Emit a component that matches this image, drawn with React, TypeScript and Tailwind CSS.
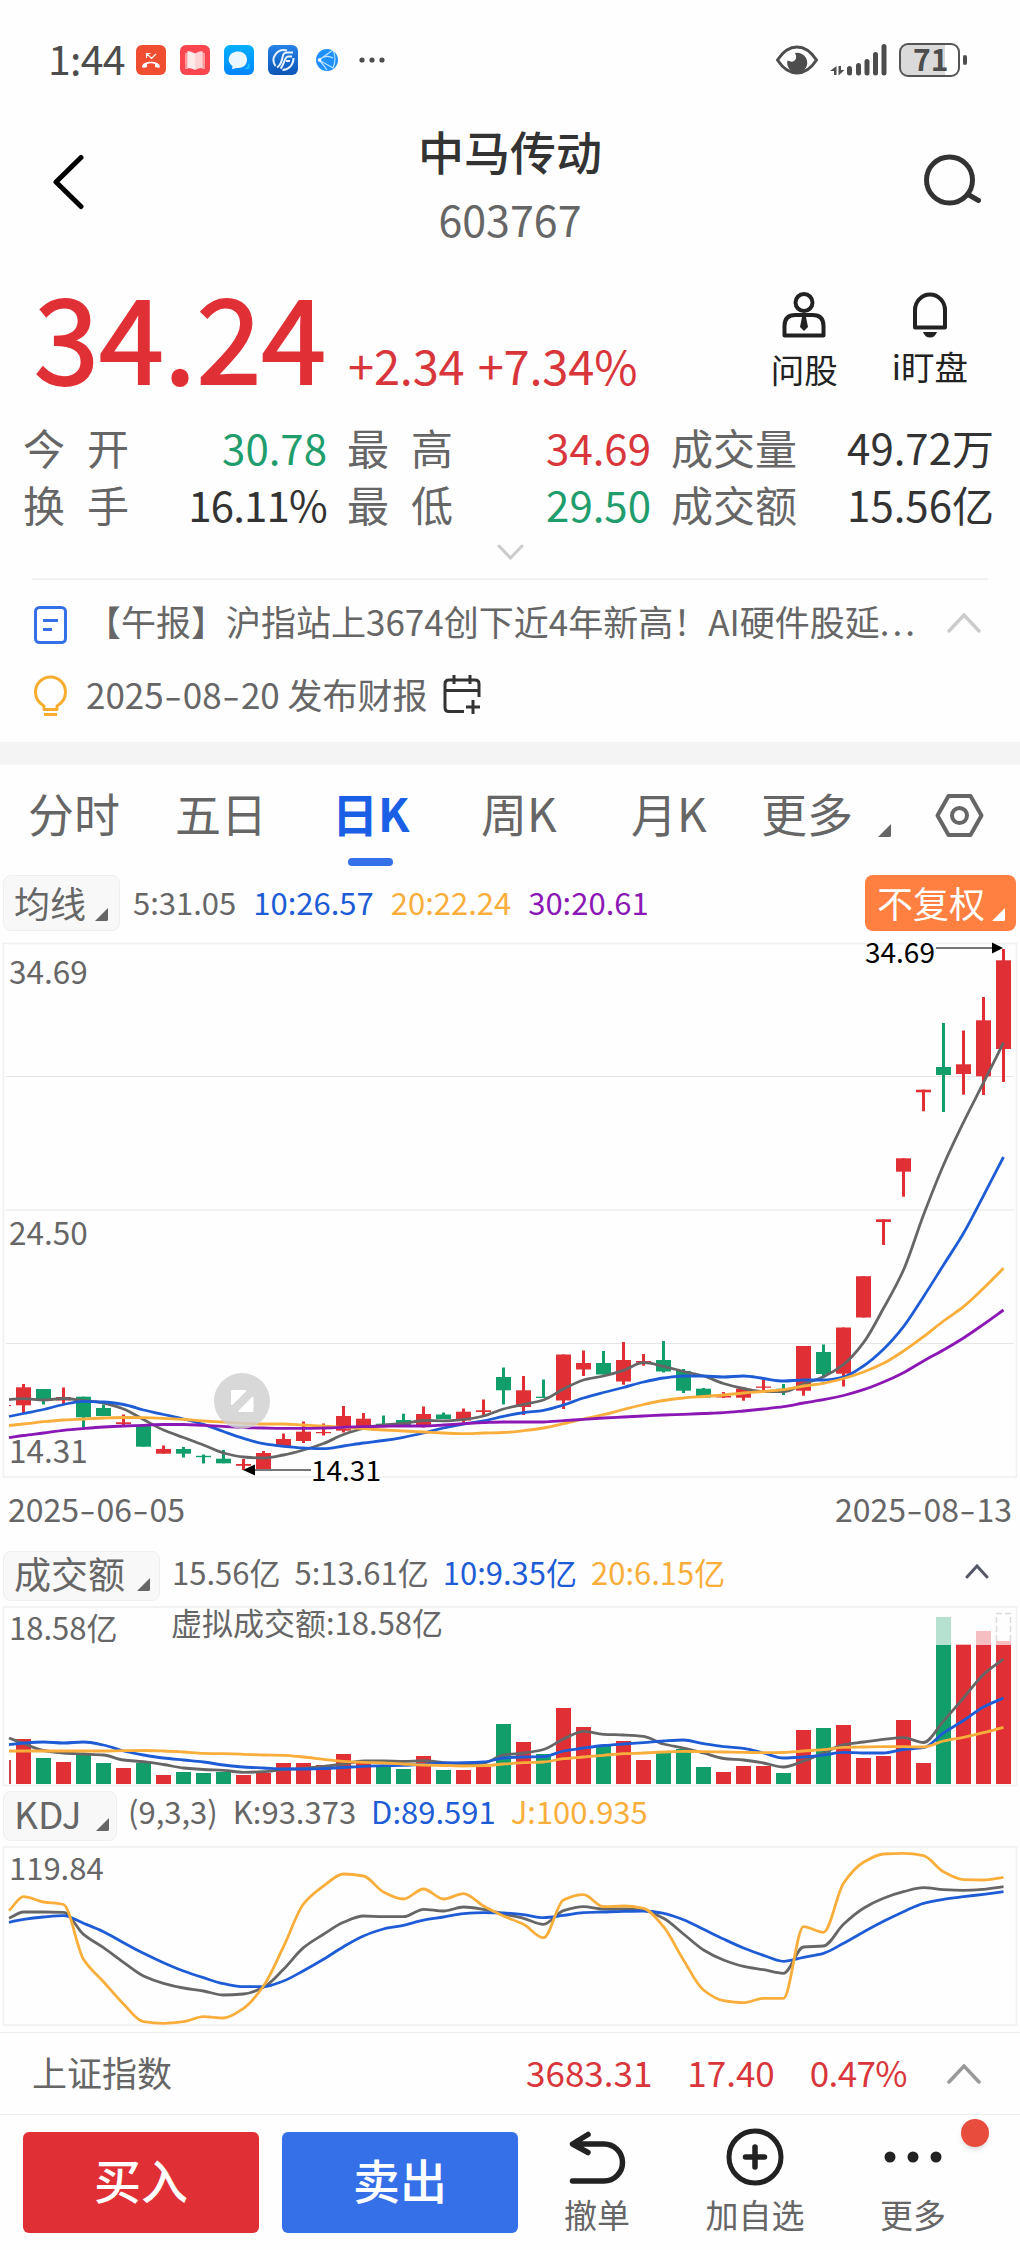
import React from 'react';
import clsx from 'clsx';

const RED = '#e03036';
const GREEN = '#129e6b';
const GRAY = '#666666';
const BLUE = '#1e5cd6';
const ORANGE = '#f9ae3b';
const PURPLE = '#8b17b5';

type Candle = [
  dir: 'r' | 'g',
  top: number,
  bottom: number,
  high: number,
  low: number,
  volume: number,
];

// body top / bottom, wick top / bottom, top of the volume bar
const candles: Candle[] = [
  ['r', 1387.3, 1405.3, 1384, 1413, 1739],
  ['g', 1389, 1400, 1389, 1404.5, 1758],
  ['r', 1397, 1400.5, 1387.5, 1404, 1762],
  ['g', 1396.7, 1417.3, 1396.7, 1427.3, 1754.7],
  ['g', 1408, 1416, 1404.5, 1416, 1763],
  ['r', 1422.3, 1424, 1414.5, 1425.5, 1768],
  ['g', 1425.3, 1446.7, 1425.3, 1446.7, 1763],
  ['r', 1449, 1453.7, 1445.5, 1453.7, 1775],
  ['g', 1449, 1453.7, 1447, 1457.5, 1772],
  ['g', 1455.8, 1457.2, 1454.5, 1463.5, 1773],
  ['g', 1458.7, 1463.3, 1450, 1463.3, 1772],
  ['r', 1464, 1465.8, 1459, 1470, 1775],
  ['r', 1453, 1469, 1451, 1470, 1773],
  ['r', 1439, 1446.7, 1433.5, 1446.7, 1763],
  ['r', 1431.7, 1441, 1421.5, 1443, 1763],
  ['r', 1432, 1433.2, 1423.5, 1435.5, 1765],
  ['r', 1416, 1430.7, 1406, 1432.5, 1754],
  ['r', 1418.7, 1427, 1413, 1427, 1763],
  ['g', 1423.7, 1425.5, 1415.5, 1427, 1767],
  ['g', 1420, 1426, 1413.7, 1427, 1769],
  ['r', 1414, 1426, 1406.5, 1427.5, 1756],
  ['g', 1414.5, 1419, 1412.5, 1419, 1770],
  ['r', 1411.7, 1420.5, 1408.5, 1422, 1770],
  ['r', 1410.3, 1412, 1399.5, 1415, 1767],
  ['g', 1377, 1390.3, 1367.5, 1404.5, 1724],
  ['r', 1390.3, 1407, 1376, 1415, 1742],
  ['g', 1396.7, 1398, 1379.5, 1398, 1754],
  ['r', 1354.5, 1400.5, 1354.5, 1409, 1708],
  ['r', 1363, 1369.5, 1350.5, 1376, 1727],
  ['g', 1363, 1374.5, 1351, 1374.5, 1746],
  ['r', 1360, 1381.5, 1342, 1384.7, 1741],
  ['r', 1361, 1362.7, 1354, 1365.7, 1760],
  ['g', 1360, 1371.5, 1341, 1372.5, 1753],
  ['g', 1371, 1390.7, 1369, 1393, 1749],
  ['g', 1388.7, 1397.5, 1388, 1397.5, 1767],
  ['r', 1396, 1397.5, 1392, 1398, 1772],
  ['r', 1388.7, 1397.7, 1387.5, 1400.7, 1766],
  ['r', 1386.5, 1387.8, 1380, 1390.5, 1766],
  ['g', 1388.7, 1390, 1384, 1395, 1773],
  ['r', 1346, 1390.7, 1346, 1395.7, 1730],
  ['g', 1352, 1374, 1344.5, 1377, 1728],
  ['r', 1327.5, 1373.7, 1327.5, 1386.5, 1725],
  ['r', 1276.2, 1317.5, 1276.2, 1317.5, 1758],
  ['r', 1219.3, 1222, 1219.3, 1245, 1756],
  ['r', 1158.3, 1171.7, 1158.3, 1196.7, 1720],
  ['r', 1089.7, 1092.3, 1089.7, 1111.3, 1763],
  ['g', 1067, 1075, 1023, 1112, 1617],
  ['r', 1064.3, 1074, 1030.5, 1094.7, 1644],
  ['r', 1020.3, 1076.3, 997, 1095, 1631],
  ['r', 960.3, 1049, 949, 1082, 1641],
];

const priceLines = [
  {
    color: GRAY,
    ys: [
      1399.5, 1398.7, 1400, 1398.5, 1400.5, 1403, 1409, 1419.5, 1430, 1437.5,
      1445, 1453, 1457, 1458, 1455, 1450, 1443.5, 1434.5, 1428.5, 1425, 1423.5,
      1420.5, 1420.8, 1419.5, 1416, 1409, 1404.5, 1400, 1389, 1380, 1376, 1370.3,
      1362.7, 1366.3, 1371.5, 1376, 1383.5, 1388.5, 1391.5, 1391.7, 1384, 1376.7,
      1364.5, 1342.7, 1308.3, 1270, 1215, 1165, 1122.3, 1082.7, 1042.7,
    ],
  },
  {
    color: BLUE,
    ys: [
      1416.5, 1413.5, 1409.5, 1404.5, 1401.3, 1402, 1404.5, 1410, 1414.5, 1419,
      1424.3, 1431.5, 1438.3, 1443.7, 1446.3, 1448, 1448.7, 1446, 1443, 1440.5,
      1437.3, 1433, 1428, 1424, 1421, 1416.3, 1412.7, 1410.3, 1405, 1398, 1392.5,
      1387.5, 1382, 1378, 1376, 1376, 1377, 1376, 1378.5, 1381, 1380, 1380, 1377,
      1366, 1349.3, 1326.7, 1296.7, 1265, 1233.3, 1195.7, 1157,
    ],
  },
  {
    color: ORANGE,
    ys: [
      1425.5, 1424, 1421.7, 1420, 1419, 1418, 1417.5, 1417.7, 1418.3, 1419.3,
      1421, 1422, 1423.3, 1424, 1424, 1425, 1426, 1427.5, 1428.7, 1430, 1431,
      1432, 1433, 1433.7, 1433, 1432.5, 1430.7, 1428, 1423.7, 1419, 1414.7,
      1409.5, 1404.5, 1400.5, 1398, 1396.5, 1395, 1393, 1391.5, 1389.7, 1386,
      1383.3, 1378.5, 1372, 1363.3, 1351, 1336.7, 1321, 1306.7, 1288.3, 1268.3,
    ],
  },
  {
    color: PURPLE,
    ys: [
      1437.7, 1435.5, 1433, 1430.3, 1428.5, 1427, 1426, 1425.3, 1424.5, 1424.5,
      1425.3, 1426.3, 1427.5, 1428, 1428.3, 1428.3, 1428, 1427.3, 1426.7, 1426.3,
      1426, 1426, 1425, 1423.7, 1422.7, 1422, 1422, 1422, 1420.7, 1419.3, 1418,
      1417, 1416, 1415, 1414.3, 1413.5, 1412.7, 1411, 1409, 1406.7, 1403, 1399.7,
      1395.5, 1389.7, 1382, 1372.7, 1361, 1350, 1338, 1324.3, 1310,
    ],
  },
];

const volumeLines = [
  {
    color: GRAY,
    ys: [
      1738, 1743.5, 1750.5, 1753, 1754, 1755, 1760, 1761.7, 1764.5, 1768, 1769.5,
      1770.3, 1772.3, 1771.7, 1769.5, 1768.3, 1766.5, 1764, 1761, 1761, 1761.5,
      1760.7, 1762.7, 1763.7, 1763, 1755, 1753, 1749.5, 1739, 1731.3, 1734.3,
      1735, 1736.3, 1744, 1748, 1753, 1758.5, 1760, 1763, 1767, 1761, 1753,
      1744.7, 1742, 1739.3, 1737.7, 1742.5, 1721, 1698, 1674.5, 1659,
    ],
  },
  {
    color: BLUE,
    ys: [
      1744.7, 1743, 1742, 1743, 1742, 1745, 1751, 1755, 1758, 1760, 1762, 1765,
      1767, 1768, 1769, 1769, 1768.5, 1767.5, 1766.3, 1765.7, 1765.3, 1764.3,
      1763, 1762.7, 1762, 1758, 1757, 1756.7, 1751, 1748, 1745.5, 1744, 1742.7,
      1741, 1740, 1743.7, 1746.7, 1748.3, 1753, 1758, 1757, 1755, 1752.3, 1753,
      1753, 1749.5, 1747.7, 1733, 1720.5, 1707, 1698,
    ],
  },
  {
    color: ORANGE,
    ys: [
      1751, 1751, 1751, 1751, 1751, 1751, 1750.7, 1750.5, 1751, 1752, 1753.3,
      1753.7, 1754.3, 1755, 1755.3, 1757, 1759.3, 1761.3, 1762.3, 1763, 1764,
      1765, 1765.5, 1766, 1765.7, 1764, 1762.7, 1762, 1758.7, 1757, 1755.3,
      1753.7, 1753, 1752, 1751.3, 1751.7, 1752, 1752.3, 1752.7, 1752.5, 1751,
      1749.7, 1747.3, 1747, 1746.7, 1746.7, 1747, 1741, 1737.3, 1732.7, 1727.3,
    ],
  },
];

const kdjLines = [
  {
    color: GRAY,
    ys: [
      1918.3, 1912, 1912, 1912.3, 1934.3, 1947.7, 1962.3, 1976, 1983.3, 1988,
      1991, 1995, 1994, 1987.3, 1969.3, 1947.7, 1934.3, 1922.3, 1916, 1916.7,
      1916.7, 1909.3, 1911, 1907, 1909.3, 1914, 1918.3, 1924.3, 1910.7, 1906.7,
      1909, 1909, 1910.3, 1918.3, 1934, 1950, 1960, 1966.3, 1969.7, 1973.3, 1947,
      1946, 1924.3, 1908.3, 1898.3, 1891.7, 1887.7, 1889.7, 1890.3, 1889.3,
      1886.7,
    ],
  },
  {
    color: BLUE,
    ys: [
      1922.3, 1919.3, 1917, 1915.7, 1923.3, 1931.7, 1942.7, 1953.3, 1962.7, 1971,
      1977.7, 1983.7, 1986.7, 1986.7, 1981, 1970.7, 1959.3, 1946.7, 1936, 1929,
      1925.3, 1920, 1917, 1913.7, 1912.7, 1913, 1914.7, 1917.7, 1915.3, 1912.7,
      1912, 1911.3, 1911, 1913.3, 1919.7, 1929.3, 1939, 1948, 1955.3, 1961.3,
      1957.3, 1953.3, 1943.3, 1932, 1921.3, 1911.7, 1903.3, 1899.3, 1896.7,
      1894.3, 1891.7,
    ],
  },
  {
    color: ORANGE,
    ys: [
      1910.7, 1896.7, 1902, 1904.5, 1959.3, 1981.7, 2004, 2021.7, 2023.3, 2021.7,
      2016.7, 2018, 2008.3, 1986, 1946.7, 1904, 1886, 1874, 1876, 1892, 1899,
      1889, 1899, 1893.7, 1906, 1916, 1924.3, 1937.7, 1900, 1894.7, 1906.7, 1906,
      1908.3, 1926.7, 1960, 1990, 2000.7, 2002.7, 1998.3, 1998.3, 1926.7, 1932.3,
      1883.3, 1862.3, 1854, 1853.3, 1855.7, 1871.7, 1879.7, 1880, 1877.3,
    ],
  },
];

const barX = (i: number) => 23.5 + i * 20;

// Cubic curve through every point; tangents go flat at local extremes.
function linePath(ys: number[]) {
  const pts = ys.map((y, i) => [i === 0 ? 9 : barX(i - 1), y]);
  const slope = pts.map(([x, y], i) => {
    const prev = pts[i - 1];
    const next = pts[i + 1];
    if (!prev || !next) return 0;
    const a = (y - prev[1]) / (x - prev[0]);
    const b = (next[1] - y) / (next[0] - x);
    return a * b <= 0 ? 0 : (2 * a * b) / (a + b);
  });
  slope[0] = (pts[1][1] - pts[0][1]) / (pts[1][0] - pts[0][0]);
  const n = pts.length - 1;
  slope[n] = (pts[n][1] - pts[n - 1][1]) / (pts[n][0] - pts[n - 1][0]);
  return pts
    .map(([x, y], i) => {
      if (i === 0) return `M${x} ${y}`;
      const [px, py] = pts[i - 1];
      const d = (x - px) / 3;
      return `C${px + d} ${py + slope[i - 1] * d} ${x - d} ${y - slope[i] * d} ${x} ${y}`;
    })
    .join('');
}

const Lines: React.FC<{ lines: { color: string; ys: number[] }[] }> = ({ lines }) => (
  <>
    {lines.map((l) => (
      <path key={l.color} d={linePath(l.ys)} fill="none" stroke={l.color} strokeWidth={2.8} />
    ))}
  </>
);

const PriceChart: React.FC = () => (
  <svg className="block overflow-visible" width="1020" height="544" viewBox="0 938 1020 544">
    <rect x="3.5" y="943.5" width="1013" height="533.5" fill="none" stroke="#f1f1f1" strokeWidth="1.6" />
    {[1076.5, 1210, 1343.5].map((y) => (
      <line key={y} x1="6" x2="1014" y1={y} y2={y} stroke="#e6e6e6" strokeWidth="1" />
    ))}
    <g fill={GRAY} fontSize="31.5">
      <text x="9" y="983.5">34.69</text>
      <text x="9" y="1244.5">24.50</text>
      <text x="9" y="1463">14.31</text>
    </g>
    <rect x="9" y="1405" width="2" height="1" fill={RED} />
    {candles.map(([dir, top, bottom, high, low], i) => {
      const fill = dir === 'r' ? RED : GREEN;
      return (
        <g key={i} fill={fill}>
          <rect x={barX(i) - 1.5} y={high} width="3" height={low - high} />
          <rect x={barX(i) - 7.5} y={top} width="15" height={bottom - top} />
        </g>
      );
    })}
    <Lines lines={priceLines} />
    <g fill="#000" fontSize="28">
      <text x="865" y="963">34.69</text>
      <line x1="936" x2="993" y1="948" y2="948" stroke="#777" strokeWidth="2" />
      <path d="M992 942.5v11l11-5.500z" />
      <text x="311" y="1481">14.31</text>
      <line x1="254" x2="311" y1="1470" y2="1470" stroke="#777" strokeWidth="2" />
      <path d="M255 1464.500v11l-12-5.500z" />
    </g>
    <circle cx="242" cy="1401" r="28" fill="#cfcfcf" fillOpacity="0.82" />
    <g fill="#fff" stroke="#fff" strokeWidth="2" strokeLinejoin="round">
      <path d="M232 1391h13l-13 13z" />
      <path d="M252.500 1398v13h-13z" />
    </g>
  </svg>
);

const VolumeChart: React.FC = () => (
  <svg className="block overflow-visible" width="1020" height="184" viewBox="0 1604 1020 184">
    <rect x="3.5" y="1607" width="1013" height="178.500" fill="none" stroke="#f1f1f1" strokeWidth="1.6" />
    <g fill={GRAY} fontSize="31">
      <text x="9" y="1640">18.58亿</text>
      <text x="171" y="1635">虚拟成交额:18.58亿</text>
    </g>
    <rect x="9" y="1760" width="2" height="24" fill="#c9454a" />
    {candles.map(([dir, , , , , volume], i) => {
      const solid = Math.max(volume, 1645);
      return (
        <g key={i} fill={dir === 'r' ? RED : GREEN}>
          {volume < 1645 && (
            <rect x={barX(i) - 7.5} y={volume} width="15" height={1645 - volume} opacity="0.3" />
          )}
          <rect x={barX(i) - 7.5} y={solid} width="15" height={1784 - solid} />
        </g>
      );
    })}
    <path d="M996.500 1641v-27.500h14v27.500" fill="none" stroke="#dcdcdc" strokeWidth="1.500" strokeDasharray="6 3" />
    <Lines lines={volumeLines} />
  </svg>
);

const KdjChart: React.FC = () => (
  <svg className="block" width="1020" height="183" viewBox="0 1845 1020 183">
    <rect x="3.5" y="1847" width="1013" height="178" fill="none" stroke="#f1f1f1" strokeWidth="1.6" />
    <text x="9" y="1880" fill={GRAY} fontSize="31">119.84</text>
    <Lines lines={kdjLines} />
  </svg>
);

const Corner: React.FC<{ className?: string }> = ({ className }) => (
  <svg className={className} width="13" height="13" viewBox="0 0 12 12" fill="currentColor">
    <path d="M12 0v10.500q0 1.500-1.500 1.500H0z" />
  </svg>
);

const Chevron: React.FC<{ className?: string; width: number; height: number; up?: boolean; stroke: number }> = ({
  className,
  width,
  height,
  up,
  stroke,
}) => (
  <svg className={className} width={width} height={height} fill="none" stroke="currentColor" strokeWidth={stroke} strokeLinecap="round">
    <path
      d={
        up
          ? `M2 ${height - 2}L${width / 2} 2L${width - 2} ${height - 2}`
          : `M2 2L${width / 2} ${height - 2}L${width - 2} 2`
      }
    />
  </svg>
);

// Dates are set with wide hyphens, close to a digit's width.
const DateText: React.FC<{ value: string }> = ({ value }) => (
  <span>
    {value.split('-').map((part, i) => (
      <React.Fragment key={i}>
        {i > 0 && <span className="mx-[0.1em] inline-block scale-x-[1.45]">-</span>}
        {part}
      </React.Fragment>
    ))}
  </span>
);

const StatusBar: React.FC = () => (
  <div className="flex h-[120px] items-center pl-[48px] text-[#4d4d4d]">
    <span className="w-[88px] text-[41px] leading-none tracking-[-0.7px] -mt-[6px]">1:44</span>
    <div className="flex items-center gap-[14px]">
      <svg width="30" height="30" viewBox="0 0 30 30">
        <rect width="30" height="30" rx="6" fill="#f04e31" />
        <path d="M6 22c0-7 18-7 18 0 0 1-5 1-5-.500v-2.500q-4-1.500-8 0v2.500c0 1.500-5 1.500-5 .500z" fill="#fff" />
        <path d="M10.500 13V8.500h4M11 9l4.500 4.500L20 9" fill="none" stroke="#fff" strokeWidth="1.200" />
      </svg>
      <svg width="30" height="30" viewBox="0 0 30 30">
        <rect width="30" height="30" rx="6" fill="#fb454f" />
        <path d="M5 8l3-.500V24H5zM25 8l-3-.500V24h3z" fill="#ff9a9c" />
        <path d="M7.500 6q4 .2 7.500 2.500V25q-3-2-7.500-2z" fill="#ffeaea" />
        <path d="M22.500 6q-4 .2-7.500 2.500V25q3-2 7.500-2z" fill="#ffd3d3" />
      </svg>
      <svg width="30" height="30" viewBox="0 0 30 30">
        <defs>
          <linearGradient id="msg" x1="0" y1="0" x2="0" y2="1">
            <stop offset="0" stopColor="#04b1ff" />
            <stop offset="1" stopColor="#0485fb" />
          </linearGradient>
        </defs>
        <rect width="30" height="30" rx="6" fill="url(#msg)" />
        <path d="M17 24q7 1 7.500-6 2.500 3 0 6z" fill="#17c8ff" />
        <path d="M14 6.500c12 0 12 16.500 0 16.500-2 0-3 .5-6 1l.5-3C1.500 16 5 6.500 14 6.500z" fill="#eaf7ff" />
      </svg>
      <svg width="30" height="30" viewBox="0 0 30 30">
        <defs>
          <linearGradient id="fund" x1="0" y1="0" x2="0" y2="1">
            <stop offset="0" stopColor="#2783e8" />
            <stop offset="1" stopColor="#0d55b5" />
          </linearGradient>
        </defs>
        <rect width="30" height="30" rx="6" fill="url(#fund)" />
        <g fill="none" stroke="#e8f3ff" strokeWidth="2">
          <path d="M19 5.500C9 3 2 13 7.500 21" />
          <path d="M25 7.500h-6c-4 0-4 3-5 7s-2 6-5 8" />
          <path d="M24 11.500h-4c-3.500 0-4 9-7.500 12M22 16h-4" />
          <path d="M25.500 13c0 7-5 12-11 12" />
        </g>
      </svg>
      <svg className="ml-[4px]" width="22" height="22" viewBox="0 0 22 22">
        <circle cx="11" cy="11" r="11" fill="#1e90ff" />
        <path d="M17 1L3 11l14 8q4-9 0-18M3 11q7-6 14-2M3 11q4 4 8 10" fill="none" stroke="#bfe6ff" strokeWidth="1.100" />
        <circle cx="3.500" cy="11" r="1.800" fill="#fff" />
      </svg>
      <svg className="ml-[7px]" width="26" height="6" fill="currentColor">
        <circle cx="3" cy="3" r="2.600" />
        <circle cx="13" cy="3" r="2.600" />
        <circle cx="23" cy="3" r="2.600" />
      </svg>
    </div>
    <div className="ml-auto flex items-center pr-[53px]">
      <svg className="mr-[12px]" width="42" height="30" viewBox="0 0 42 30">
        <path d="M1.500 15Q10 2 21 2t19.500 13Q32 28 21 28T1.500 15z" fill="none" stroke="currentColor" strokeWidth="3" />
        <path d="M19 8a10 10 0 1 1-7.500 7.500q6.500 3 8.500-2 .500-3-1-5.500z" fill="currentColor" />
      </svg>
      <svg className="mr-[12px]" width="57" height="32" viewBox="0 0 57 32" fill="currentColor">
        <path d="M4 31h2.500V22L0 27h4zM8.500 22v9.500l6-5.500H11v-4z" />
        <rect x="17" y="22" width="5" height="9.500" rx="2.500" />
        <rect x="26" y="19" width="5" height="12.500" rx="2.500" />
        <rect x="34.500" y="15" width="5" height="16.500" rx="2.500" />
        <rect x="43" y="8" width="5" height="23.500" rx="2.500" />
        <rect x="51.500" y="0" width="5" height="31.500" rx="2.500" />
      </svg>
      <div className="flex h-[34px] w-[61px] items-center rounded-[9px] border-2 border-[#555] bg-linear-to-r from-[#dadada] from-78% to-white to-78% pl-[12px]">
        <span className="text-[30px] font-bold leading-none -mt-[4px]">71</span>
      </div>
      <div className="ml-[3px] h-[10px] w-[4px] rounded-full bg-current" />
    </div>
  </div>
);

const Header: React.FC = () => (
  <div className="flex h-[150px] items-start justify-between pl-[52px] pr-[39px]">
    <svg className="mt-[34px]" width="36" height="56" viewBox="0 0 36 56" fill="none" stroke="#000" strokeWidth="5" strokeLinecap="round" strokeLinejoin="round">
      <path d="M29 3.500L4 28l25 24.500" />
    </svg>
    <div className="flex flex-col items-center pl-[8px]">
      <h1 className="mt-[7px] text-[46px] font-medium leading-none text-[#333]">中马传动</h1>
      <span className="mt-[24px] text-[43px] leading-none text-[#666]">603767</span>
    </div>
    <svg className="mt-[34px]" width="57" height="54" viewBox="0 0 57 54" fill="none" stroke="#333" strokeLinecap="round">
      <circle cx="25.500" cy="26" r="23" strokeWidth="5" />
      <path d="M45 41l9.500 5.500" strokeWidth="5" />
    </svg>
  </div>
);

const Quote: React.FC = () => (
  <div className="flex h-[151px] items-start pl-[34px]">
    <span className="mt-[5px] w-[314px] text-[117px] leading-none text-[#e03036] [-webkit-text-stroke:1.8px_#e03036]">34.24</span>
    <span className="mt-[71px] text-[47px] leading-none text-[#d8363b] [word-spacing:3px] tracking-[-0.2px]">+2.34 +7.34%</span>
    <div className="ml-auto flex gap-[54px] pr-[52px] text-[33.5px] leading-none text-[#222]">
      <div className="flex flex-col items-center">
        <svg className="mt-[22px]" width="44" height="46" viewBox="0 0 44 46" fill="none" stroke="#222" strokeWidth="4">
          <circle cx="22" cy="10.500" r="8.500" />
          <path d="M2.500 43.500V34q0-11 11-11h17q11 0 11 11v9.500z" strokeLinejoin="round" />
          <path d="M20 25h4l2 10-4 4-4-4z" fill="#222" stroke="none" />
        </svg>
        <span className="mt-[14px]">问股</span>
      </div>
      <div className="flex flex-col items-center">
        <svg className="mt-[22px]" width="36" height="46" viewBox="0 0 36 46" fill="none" stroke="#222" strokeWidth="4">
          <path d="M3 35.500V18a15 15.500 0 0 1 30 0v17.500z" strokeLinejoin="round" />
          <path d="M11 40h14q-2 5.500-7 5.500T11 40z" fill="#222" stroke="none" />
        </svg>
        <span className="mt-[11px]">i盯盘</span>
      </div>
    </div>
  </div>
);

const stats = [
  { label: '今开', value: '30.78', color: 'text-[#1f9d6c]', wide: true },
  { label: '最高', value: '34.69', color: 'text-[#d8363b]', wide: true },
  { label: '成交量', value: '49.72万', color: 'text-[#333]' },
  { label: '换手', value: '16.11%', color: 'text-[#333] tracking-[-0.8px]', wide: true },
  { label: '最低', value: '29.50', color: 'text-[#1f9d6c]', wide: true },
  { label: '成交额', value: '15.56亿', color: 'text-[#333]' },
];

const Stats: React.FC = () => (
  <div className="grid h-[114px] grid-cols-[304px_304px_323px] gap-x-[20px] pl-[23px] text-[42px] leading-[51px]">
    {stats.map((s) => (
      <div key={s.label} className="flex h-[57px] justify-between">
        <span className={clsx('text-[#666]', s.wide && 'tracking-[22px]')}>{s.label}</span>
        <span className={s.color}>{s.value}</span>
      </div>
    ))}
  </div>
);

const News: React.FC = () => (
  <div className="h-[162px] px-[32px] pt-[6px] text-[35px] text-[#666]">
    <div className="flex h-[73px] items-center">
      <svg className="mt-[4px]" width="36" height="40" viewBox="0 0 36 40" fill="none" stroke="#3570e8" strokeWidth="3">
        <rect x="3.500" y="2.500" width="30" height="35" rx="4" />
        <path d="M11 15.500h15M11 24.500h9" />
      </svg>
      <span className="ml-[18px] w-[840px] whitespace-nowrap leading-none -mt-[5px]">
        【午报】沪指站上3674创下近4年新高！AI硬件股延<span className="tracking-[3px]">...</span>
      </span>
      <Chevron className="ml-auto mr-[7px] text-[#ccc]" width={34} height={20} up stroke={3.5} />
    </div>
    <div className="flex h-[73px] items-center">
      <svg width="36" height="42" viewBox="0 0 36 42" fill="none" stroke="#f7ae30" strokeWidth="3">
        <path d="M12 34.500V31Q3.500 26 3.500 17a15 15 0 0 1 30 0q0 9-8.500 14v3.500z" strokeLinejoin="round" />
        <path d="M12 39.500h13" />
      </svg>
      <span className="ml-[18px] leading-none -mt-[5px]">
        <DateText value="2025-08-20" /> 发布财报
      </span>
      <svg className="ml-[14px] -mt-[2px]" width="40" height="40" viewBox="0 0 40 40" fill="none" stroke="#333" strokeWidth="3">
        <path d="M22 36.500H7q-4 0-4-4V9q0-4 4-4h26q4 0 4 4v13M3 15.500h34M12 0v9M28 0v9M31 25v14M24 32h14" />
      </svg>
    </div>
  </div>
);

const Tabs: React.FC = () => (
  <div className="flex h-[105px] items-start pl-[28px] text-[46px] leading-none text-[#666]">
    {[
      { name: '分时', cls: 'w-[147px]' },
      { name: '五日', cls: 'w-[157px]' },
      { name: '日K', cls: 'w-[149px]', active: true },
      { name: '周K', cls: 'w-[150px]' },
      { name: '月K', cls: 'w-[130px]' },
      { name: '更多', cls: 'w-[117px]' },
    ].map((t) => (
      <div key={t.name} className={clsx('pt-[24px]', t.cls)}>
        <div className={clsx('flex w-fit flex-col items-center', t.active && 'font-bold text-[#1a5fe5]')}>
          {t.name}
          {t.active && <div className="mt-[23px] h-[8px] w-[45px] rounded-full bg-[#3570e8]" />}
        </div>
      </div>
    ))}
    <Corner className="mt-[59px]" />
    <svg className="ml-[44px] mt-[28px]" width="49" height="45" viewBox="0 0 49 45" fill="none" stroke="#666" strokeWidth="4">
      <path d="M13.500 3h22L46.500 22.500 35.500 42h-22L2.500 22.500z" strokeLinejoin="round" />
      <circle cx="24.500" cy="22.500" r="7.500" />
    </svg>
  </div>
);

const Chip: React.FC<{ className: string; children: React.ReactNode }> = ({ className, children }) => (
  <div className={clsx('flex shrink-0 items-center rounded-lg border border-[#efefef] bg-[#f8f8f8] pl-[10px] text-[#666]', className)}>
    {children}
  </div>
);

const App: React.FC = () => {
  return (
    <div className="h-[2250px] w-[1020px] overflow-hidden bg-[#fefefe] font-['Noto_Sans_CJK_SC','Noto_Sans',sans-serif]">
      <StatusBar />
      <Header />
      <Quote />
      <Stats />
      <div className="mx-[32px] flex h-[45px] justify-center border-b-2 border-[#f2f2f2] pt-[9px] text-[#ccc]">
        <Chevron width={27} height={16} stroke={3} />
      </div>
      <News />
      <div className="h-[23px] bg-[#f4f4f4]" />
      <Tabs />

      <div className="flex h-[68px] items-start pl-[3px] pr-[4px] pt-[5px]">
        <Chip className="h-[56px] w-[117px] text-[36px] leading-none">
          <span className="-mt-[3px]">均线</span>
          <Corner className="ml-[9px] mt-[22px]" />
        </Chip>
        <div className="flex gap-[17px] pl-[13px] pt-[11px] text-[31px] leading-none">
          <span className="text-[#666]">5:31.05</span>
          <span className="text-[#1e5cd6]">10:26.57</span>
          <span className="text-[#f9ae3b]">20:22.24</span>
          <span className="text-[#8b17b5]">30:20.61</span>
        </div>
        <div className="ml-auto flex h-[56px] w-[151px] items-center rounded-lg bg-[#ff8040] pl-[12px] text-[36px] leading-none text-white">
          <span className="-mt-[3px]">不复权</span>
          <Corner className="ml-[7px] mt-[22px]" />
        </div>
      </div>
      <PriceChart />
      <div className="flex h-[64px] justify-between px-[8px] pt-[10px] text-[32px] leading-none text-[#666]">
        <DateText value="2025-06-05" />
        <DateText value="2025-08-13" />
      </div>

      <div className="flex h-[58px] items-start pl-[3px] pt-[5px]">
        <Chip className="h-[50px] w-[157px] text-[37px] leading-none">
          <span className="-mt-[5px]">成交额</span>
          <Corner className="ml-[12px] mt-[16px]" />
        </Chip>
        <div className="flex gap-[14px] pl-[12px] pt-[5px] text-[31px] leading-none">
          <span className="text-[#666]">15.56亿</span>
          <span className="text-[#666]">5:13.61亿</span>
          <span className="text-[#1e5cd6]">10:9.35亿</span>
          <span className="text-[#f9ae3b]">20:6.15亿</span>
        </div>
        <Chevron className="ml-auto mr-[31px] mt-[13px] text-[#555866]" width={24} height={15} up stroke={3} />
      </div>
      <VolumeChart />

      <div className="flex h-[57px] items-start pl-[3px] pt-[3px]">
        <Chip className="h-[50px] w-[114px] text-[37px] leading-none">
          <span className="-mt-[5px]">KDJ</span>
          <Corner className="ml-[14px] mt-[16px]" />
        </Chip>
        <div className="flex gap-[15px] pl-[11px] pt-[4px] text-[31px] leading-none">
          <span className="text-[#666]">(9,3,3)</span>
          <span className="text-[#666]">K:93.373</span>
          <span className="text-[#1e5cd6]">D:89.591</span>
          <span className="text-[#f9ae3b]">J:100.935</span>
        </div>
      </div>
      <KdjChart />

      <div className="mt-[4px] flex h-[82px] items-center border-t border-[#eee] px-[32px] text-[35px] leading-none text-[#666]">
        <span className="-mt-[4px]">上证指数</span>
        <div className="-mt-[5px] ml-auto flex gap-[35px] text-[#d8363b]">
          <span>3683.31</span>
          <span>17.40</span>
          <span className="tracking-[-0.6px]">0.47%</span>
        </div>
        <Chevron className="ml-[40px] mr-[7px] text-[#999]" width={34} height={20} up stroke={3.5} />
      </div>

      <div className="flex h-[136px] items-start border-t border-[#eee] pl-[23px] text-[33px] leading-none text-[#666]">
        <button className="mt-[17px] h-[101px] w-[236px] rounded-md bg-[#e03036] pb-[9px] text-[47px] font-medium leading-none text-white">买入</button>
        <button className="ml-[23px] mt-[17px] h-[101px] w-[236px] rounded-md bg-[#3570e8] pb-[9px] text-[47px] font-medium leading-none text-white">卖出</button>
        <div className="ml-[46px] flex w-[66px] flex-col items-center">
          <svg className="mt-[16px]" width="60" height="54" viewBox="0 0 60 54" fill="none" stroke="#222" strokeWidth="5.500" strokeLinecap="round" strokeLinejoin="round">
            <path d="M21 3.500L5.500 13 21 21.500M7 13h30a18.500 18.500 0 0 1 0 37H5.500" />
          </svg>
          <span className="mt-[13px]">撤单</span>
        </div>
        <div className="ml-[75px] flex w-[100px] flex-col items-center">
          <svg className="mt-[13px]" width="58" height="58" viewBox="0 0 58 58" fill="none" stroke="#222" strokeWidth="5" strokeLinecap="round">
            <circle cx="29" cy="29" r="26" />
            <path d="M29 19v20M19.500 29h19" strokeWidth="5.500" />
          </svg>
          <span className="mt-[12px]">加自选</span>
        </div>
        <div className="relative ml-[75px] flex w-[66px] flex-col items-center">
          <svg className="mt-[36px]" width="58" height="12" viewBox="0 0 58 12" fill="#222">
            <circle cx="6" cy="6" r="5.500" />
            <circle cx="29" cy="6" r="5.500" />
            <circle cx="52" cy="6" r="5.500" />
          </svg>
          <span className="mt-[35px]">更多</span>
          <div className="absolute left-[81px] top-[4px] size-[28px] rounded-full bg-[#e84c3d] shadow-md" />
        </div>
      </div>
    </div>
  );
};

export default App;
